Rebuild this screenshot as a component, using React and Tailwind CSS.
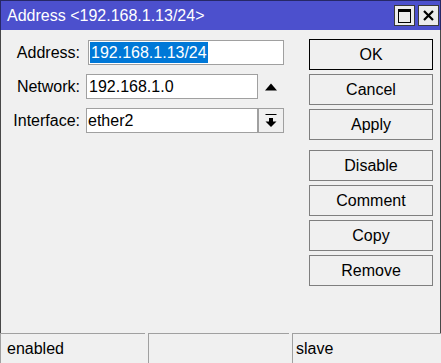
import React from "react";

function TitleButton({ children }) {
  return (
    <div className="w-[21px] h-[21px] bg-[#ececec] border border-[#3a3a3a] flex items-center justify-center">
      {children}
    </div>
  );
}

function Btn({ label, def }) {
  return (
    <div
      className={
        "h-[31px] w-full flex items-center justify-center bg-[#f0f0f0] border " +
        (def ? "border-black" : "border-[#7f7f7f]")
      }
    >
      <span className="leading-none">{label}</span>
    </div>
  );
}

export default function App() {
  return (
    <div className="w-[441px] h-[363px] flex flex-col bg-[#f0f0f0] font-['Liberation_Sans',Arial,sans-serif] text-[16px] text-black overflow-hidden">
      {/* Title bar */}
      <div className="h-[30px] shrink-0 bg-[#4c50cd] border-t border-x border-black/50 flex items-center pl-[6px] pr-[1px]">
        <span className="text-white flex-1 leading-none">Address &lt;192.168.1.13/24&gt;</span>
        <div className="flex gap-[3px]">
          <TitleButton>
            <svg width="13" height="14" viewBox="0 0 13 14">
              <rect x="0.5" y="0.5" width="12" height="13" fill="none" stroke="#000" strokeWidth="1" />
              <rect x="0" y="0" width="13" height="3" fill="#000" />
            </svg>
          </TitleButton>
          <TitleButton>
            <svg width="11" height="11" viewBox="0 0 11 11">
              <path d="M1 1 L10 10 M10 1 L1 10" stroke="#000" strokeWidth="2.2" fill="none" />
            </svg>
          </TitleButton>
        </div>
      </div>

      {/* Body */}
      <div className="flex-1 flex border-x border-black/70">
        <div className="flex-1 flex flex-col pt-[10px] gap-[9px]">
          <div className="flex items-center h-[25px]">
            <div className="w-[79px] text-right leading-none">Address:</div>
            <div className="ml-[8px] w-[196px] h-[25px] bg-white border border-[#a0a0a0] flex items-center pl-[1px]">
              <span className="inline-block h-[21px] leading-[21px] bg-[#0078d7] text-white pl-[1px] pr-[1px]">
                192.168.1.13/24
              </span>
            </div>
          </div>
          <div className="flex items-center h-[25px]">
            <div className="w-[79px] text-right leading-none">Network:</div>
            <div className="ml-[6px] w-[172px] h-[25px] bg-white border border-[#a0a0a0] flex items-center pl-[2px]">
              <span className="leading-none">192.168.1.0</span>
            </div>
            <div className="w-[26px] h-[25px] flex items-center justify-center">
              <svg width="12" height="8" viewBox="0 0 12 8">
                <path d="M0 7.5 L12 7.5 L6 0.5 Z" fill="#000" />
              </svg>
            </div>
          </div>
          <div className="flex items-center h-[25px]">
            <div className="w-[79px] text-right leading-none">Interface:</div>
            <div className="ml-[6px] w-[172px] h-[25px] bg-white border border-[#a0a0a0] flex items-center pl-[1px]">
              <span className="leading-none">ether2</span>
            </div>
            <div className="w-[26px] h-[25px] bg-[#f0f0f0] border border-[#a0a0a0] flex items-center justify-center">
              <svg width="12" height="14" viewBox="0 0 12 14">
                <rect x="0.5" y="0" width="11" height="1" fill="#000" />
                <rect x="4" y="4" width="4" height="4" fill="#000" />
                <path d="M0.5 7.5 L11.5 7.5 L6 13 Z" fill="#000" />
              </svg>
            </div>
          </div>
        </div>

        <div className="w-[124px] mr-[7px] pt-[9px] flex flex-col">
          <div className="flex flex-col gap-[4px]">
            <Btn label="OK" def />
            <Btn label="Cancel" />
            <Btn label="Apply" />
          </div>
          <div className="flex flex-col gap-[4px] mt-[10px]">
            <Btn label="Disable" />
            <Btn label="Comment" />
            <Btn label="Copy" />
            <Btn label="Remove" />
          </div>
        </div>
      </div>

      {/* Status bar */}
      <div className="h-[30px] shrink-0 flex gap-[3px]">
        <div className="w-[145px] border-t border-l border-[#a0a0a0] flex items-center pl-[6px]">
          <span className="leading-none">enabled</span>
        </div>
        <div className="w-[141px] border-t border-l border-[#a0a0a0]" />
        <div className="flex-1 border-t border-l border-[#a0a0a0] flex items-center pl-[3px]">
          <span className="leading-none">slave</span>
        </div>
      </div>
    </div>
  );
}
